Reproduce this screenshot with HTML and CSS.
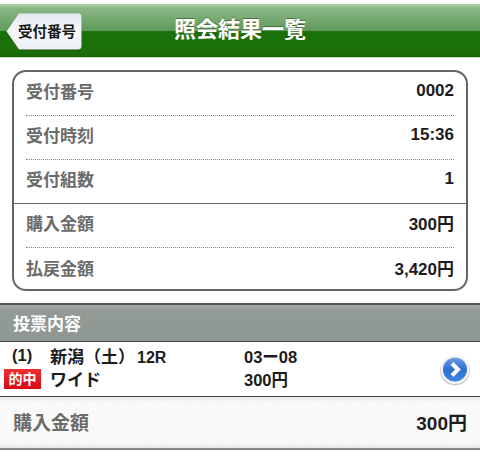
FILE: index.html
```html
<!DOCTYPE html>
<html lang="ja">
<head>
<meta charset="utf-8">
<title>照会結果一覧</title>
<link rel="stylesheet" href="styles.css">
</head>
<body>
<header class="nav">
  <div class="back">
    <svg class="back-shape" viewBox="0 0 76 37" width="76" height="37"><path d="M13 .5H72a3.500 3.500 0 0 1 3.500 3.500V33a3.500 3.500 0 0 1-3.500 3.500H13L.5 18.500Z" fill="url(#bk)"/><defs><linearGradient id="bk" x1="0" y1="0" x2="0" y2="1"><stop offset="0" stop-color="#e4e8f0"/><stop offset=".5" stop-color="#f6f8fb"/><stop offset="1" stop-color="#eceff5"/></linearGradient></defs></svg>
    <span class="back-label">受付番号</span>
  </div>
  <h1 class="nav-title">照会結果一覧</h1>
</header>
<section class="card">
  <div class="row dotted"><span class="label">受付番号</span><span class="value">0002</span></div>
  <div class="row dotted"><span class="label">受付時刻</span><span class="value">15:36</span></div>
  <div class="row solid"><span class="label">受付組数</span><span class="value">1</span></div>
  <div class="row dotted"><span class="label">購入金額</span><span class="value">300円</span></div>
  <div class="row"><span class="label">払戻金額</span><span class="value">3,420円</span></div>
</section>
<h2 class="section-head">投票内容</h2>
<div class="bet">
  <div class="bet-line">
    <span class="c-num">(1)</span><span class="c-race">新潟（土）<span class="race-no">12R</span></span><span class="c-amt">03ー08</span>
  </div>
  <div class="bet-line">
    <span class="c-num"><span class="hit">的中</span></span><span class="c-race">ワイド</span><span class="c-amt">300円</span>
  </div>
  <svg class="go" viewBox="0 0 32 32" width="32" height="32">
    <defs><linearGradient id="gb" x1="0" y1="0" x2="0" y2="1"><stop offset="0" stop-color="#6f9fe6"/><stop offset=".5" stop-color="#2f6fd2"/><stop offset="1" stop-color="#3f86e2"/></linearGradient></defs>
    <circle cx="16" cy="16.500" r="15" fill="#c9c9c9"/>
    <circle cx="16" cy="15.500" r="14.500" fill="#f4f4f4"/>
    <circle cx="16" cy="15.500" r="12" fill="url(#gb)"/>
    <path d="M13 9.500l6 6-6 6" fill="none" stroke="#fff" stroke-width="4"/>
  </svg>
</div>
<div class="total"><span class="total-label">購入金額</span><span class="total-value">300円</span></div>
</body>
</html>
```
FILE: styles.css
```css
* { box-sizing: border-box; }
html, body { margin: 0; padding: 0; }
body {
  width: 480px;
  height: 467px;
  overflow: hidden;
  background: #fff;
  font-family: "Liberation Sans", "Noto Sans CJK JP", sans-serif;
  font-weight: 700;
}
.nav {
  height: 54px;
  margin-top: 4px;
  position: relative;
  display: flex;
  align-items: center;
  justify-content: center;
  background: linear-gradient(#b4ceae 0, #8bb786 8%, #5f9a5b 50%, #1a7009 52%, #1c7209 85%, #1a6708 100%);
  border-bottom: 1px solid #c7d8c4;
}
.nav-title {
  margin: 0 0 1px 0;
  font-size: 22px;
  line-height: 26px;
  font-weight: 700;
  color: #fff;
  text-shadow: 0 -1px 0 rgba(0,0,0,.35);
}
.back {
  position: absolute;
  left: 6px;
  top: 9px;
  width: 76px;
  height: 37px;
  display: flex;
  align-items: center;
}
.back-shape { position: absolute; left: 0; top: 0; filter: drop-shadow(0 1px 0 rgba(0,0,0,.3)); }
.back-label {
  position: relative;
  margin-left: 12px;
  font-size: 14.500px;
  line-height: 18px;
  color: #1a1a1a;
}
.card {
  margin: 12px 12px 0;
  height: 221px;
  border: 2px solid #666;
  border-radius: 14px;
  background: #fff;
  padding: 0 12px;
}
.row {
  height: 44px;
  padding-bottom: 6px;
  display: flex;
  align-items: center;
  justify-content: space-between;
}
.dotted { border-bottom: 1px dotted #888; }
.solid { border-bottom: 1px solid #666; margin: 0 -12px; padding: 0 12px 6px; }
.label { font-size: 17px; color: #6b6b6b; }
.value { font-size: 17px; color: #1c1c1c; }
.section-head {
  margin: 12px 0 0;
  height: 39px;
  padding: 0 13px 2px;
  display: flex;
  align-items: center;
  font-size: 17px;
  font-weight: 700;
  color: #fff;
  background: linear-gradient(#a5aca7 0, #939b96 15%, #8f9792 100%);
  border-top: 2px solid #555;
  border-bottom: 1px solid #444;
}
.bet {
  height: 55px;
  position: relative;
  padding: 2px 0 0 4px;
  border-bottom: 1px solid #444;
  background: #fff;
  font-size: 16.500px;
  color: #1c1c1c;
}
.bet-line { height: 23px; display: flex; align-items: center; }
.c-num { width: 46px; padding-left: 8px; }
.bet-line .c-num:has(.hit) { padding-left: 0; }
.c-race { width: 194px; font-size: 17px; }
.race-no { font-size: 16px; margin-left: 2px; }
.hit {
  display: block;
  width: 37px;
  height: 20px;
  line-height: 20px;
  text-align: center;
  font-size: 14px;
  color: #fff;
  background: linear-gradient(#f03030, #d40a14);
}
.go { position: absolute; right: 9px; top: 12px; }
.total {
  height: 53px;
  padding: 0 13px 2px;
  display: flex;
  align-items: center;
  justify-content: space-between;
  background: repeating-linear-gradient(135deg, #fbfbfb 0 2px, #f6f6f6 2px 3px);
  box-shadow: inset 0 6px 6px -5px #ddd, inset 0 -6px 6px -5px #ddd;
  border-bottom: 2px solid #888;
}
.total-label { font-size: 19px; color: #6b6b6b; }
.total-value { font-size: 19px; color: #1c1c1c; }
```
